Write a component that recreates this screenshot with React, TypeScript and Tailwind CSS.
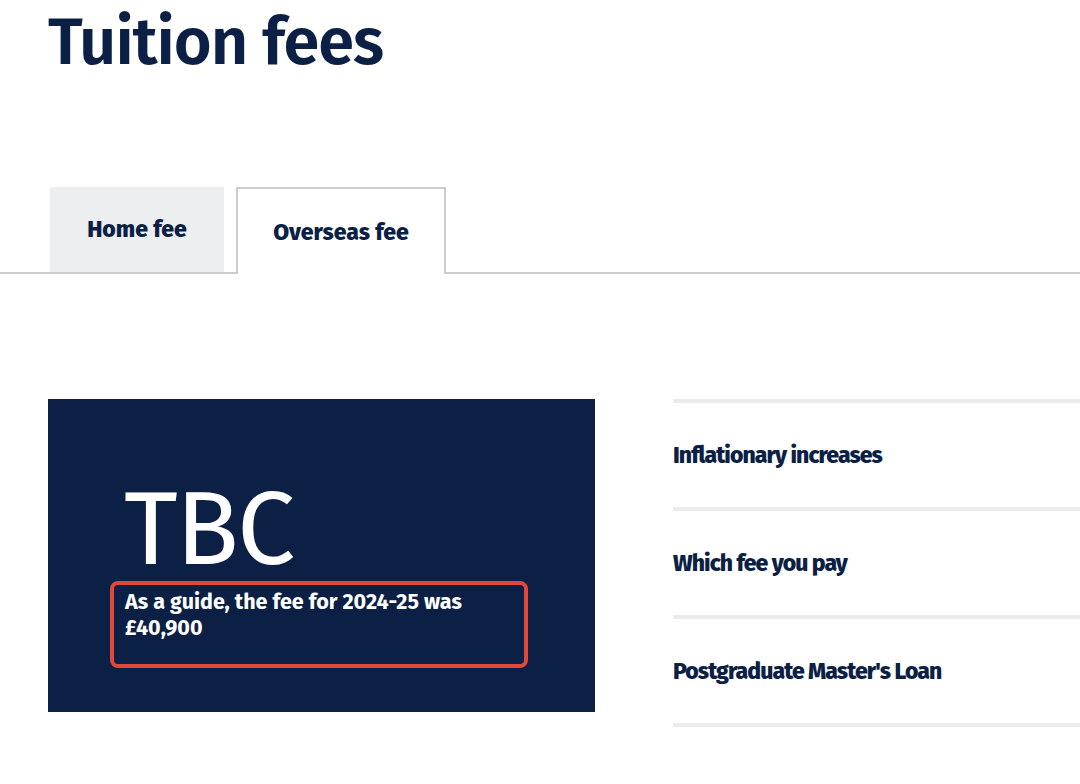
export default function App() {
  const links = ["Inflationary increases", "Which fee you pay", "Postgraduate Master's Loan"];
  return (
    <div className="w-[1080px] h-[784px] overflow-hidden bg-white text-[#0c1f45]" style={{ fontFamily: '"Fira Sans", Lato, "Noto Sans", sans-serif' }}>
      {/* Heading */}
      <h1 className="pl-[48px] pt-[2px] text-[65px] font-semibold leading-[80px] tracking-[-1px]">Tuition fees</h1>

      {/* Tabs */}
      <div className="mt-[105px] flex items-end gap-[12px] pl-[50px] border-b-2 border-[#cccccc]">
        <div className="w-[174px] h-[85px] bg-[#eceef0] flex items-center justify-center text-[23px] font-extrabold">Home fee</div>
        <div className="w-[210px] h-[87px] -mb-[2px] bg-white border-2 border-b-0 border-[#cccccc] flex items-center justify-center text-[23px] font-extrabold pt-[2px]">Overseas fee</div>
      </div>

      {/* Content */}
      <div className="mt-[125px] flex pl-[48px] gap-[78px]">
        <div className="w-[547px] h-[313px] shrink-0 bg-[#0c1f45] flex flex-col pl-[62px] pt-[76px]">
          <div className="text-white text-[104px] font-normal leading-[110px] pl-[14px] tracking-[-2px]">TBC</div>
          <div className="mt-[-4px] w-[418px] h-[87px] border-4 border-[#e0493a] rounded-[8px] px-[11px] pt-[4px]">
            <p className="text-white text-[21.5px] font-bold leading-[26px]">As a guide, the fee for 2024-25 was<br />£40,900</p>
          </div>
        </div>
        <div className="flex-1 flex flex-col">
          {links.map((l) => (
            <div key={l} className="h-[108px] border-t-4 border-[#ebebeb] flex items-center text-[23px] font-extrabold tracking-[-0.9px]">{l}</div>
          ))}
          <div className="border-t-4 border-[#ebebeb]" />
        </div>
      </div>
    </div>
  );
}
